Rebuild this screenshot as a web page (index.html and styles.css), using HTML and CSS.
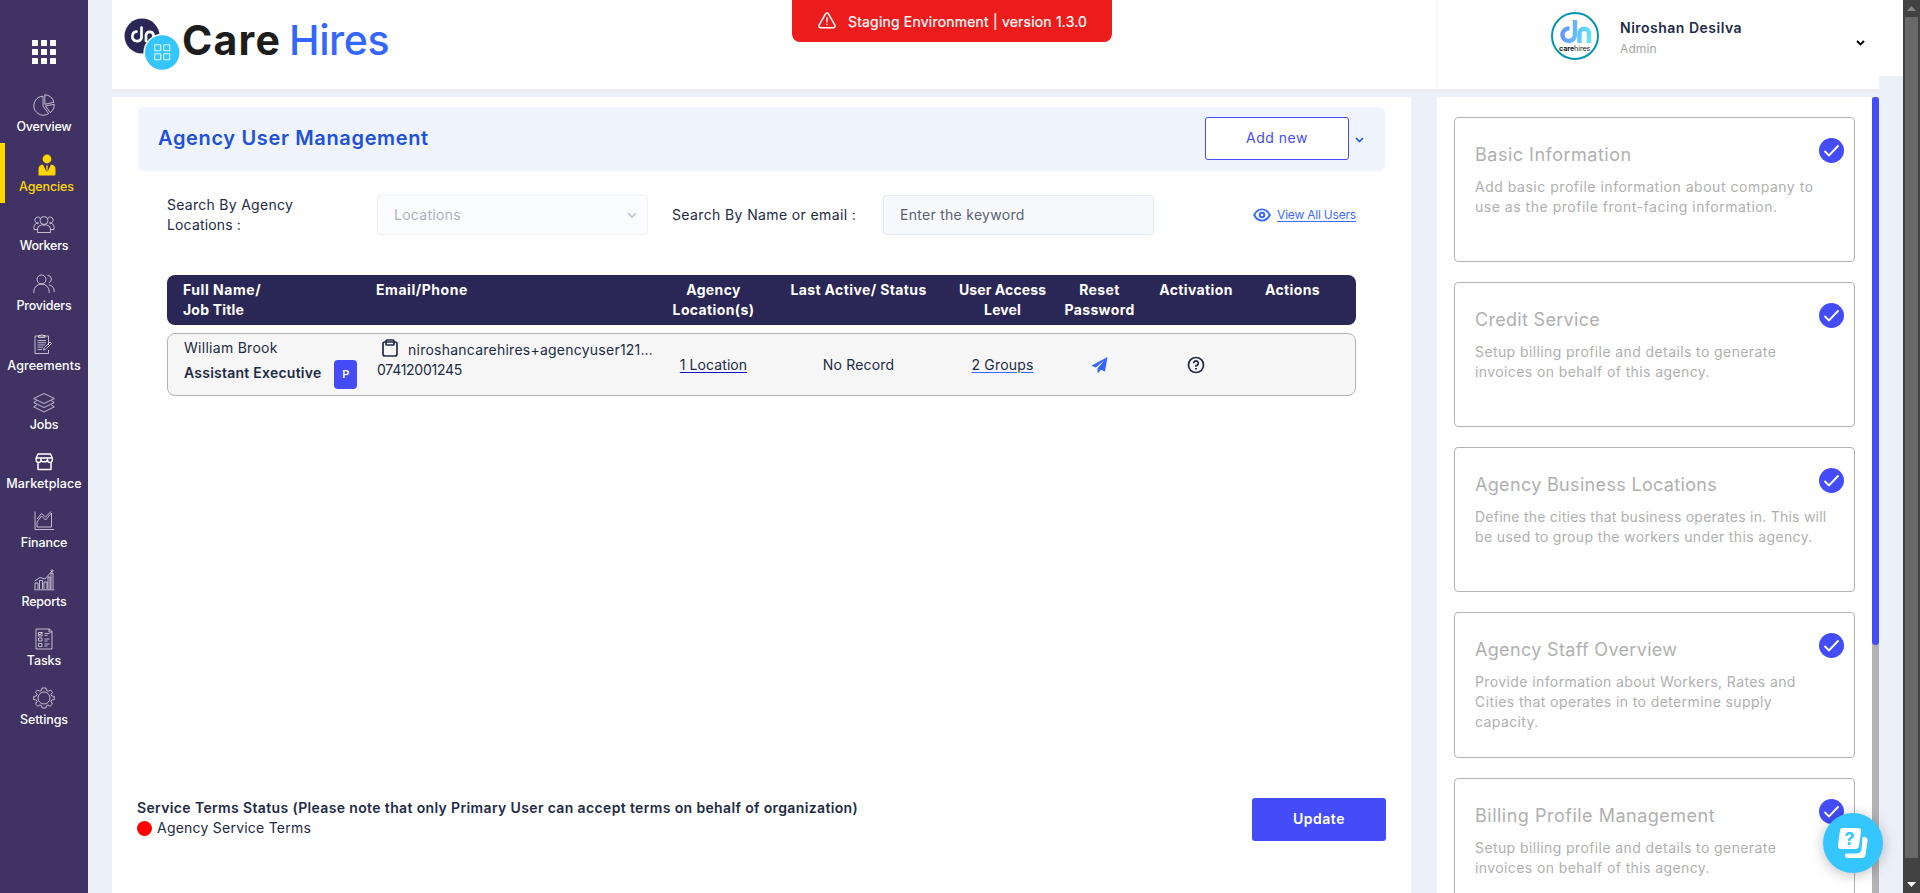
FILE: index.html
```html
<!DOCTYPE html>
<html lang="en">
<head>
<meta charset="utf-8">
<title>Care Hires - Agency User Management</title>
<link rel="stylesheet" href="styles.css">
</head>
<body>
<nav class="sidebar">
  <svg class="apps" width="24" height="24" fill="#fff"><rect width="6" height="6" rx=".6"/><rect x="9" width="6" height="6" rx=".6"/><rect x="18" width="6" height="6" rx=".6"/><rect y="9" width="6" height="6" rx=".6"/><rect x="9" y="9" width="6" height="6" rx=".6"/><rect x="18" y="9" width="6" height="6" rx=".6"/><rect y="18" width="6" height="6" rx=".6"/><rect x="9" y="18" width="6" height="6" rx=".6"/><rect x="18" y="18" width="6" height="6" rx=".6"/></svg>
  <a class="nav-item"><svg viewBox="0 0 22 22"><path d="M10 2.200A9.500 9.500 0 1 0 15.600 19.600L10 12ZM11.800.8A9.300 9.300 0 0 1 20.900 8.300L11.800 10.300ZM12.500 11.900 21.200 10.300A9.500 9.500 0 0 1 17.200 18.600Z"/></svg><span class="tight">Overview</span></a>
  <a class="nav-item active"><svg viewBox="0 0 22 22" class="solid"><circle cx="11" cy="5" r="4.400"/><path d="M2.500 21.500V15Q2.500 11 7 10.500L10.500 18 10.200 12 11 11 11.800 12 11.500 18 15 10.500Q19.500 11 19.500 15V20Q19.500 21.500 18 21.500Z"/></svg><span>Agencies</span></a>
  <a class="nav-item roomy"><svg viewBox="0 0 22 22"><circle cx="11" cy="7.500" r="4"/><path d="M4.500 19.500V16Q4.500 12.500 8.500 12H13.500Q17.500 12.500 17.500 16V19.500ZM7 5A3 3 0 1 0 5.500 10Q1 10.500 1 14V16.500H4M15 5A3 3 0 1 1 16.500 10Q21 10.500 21 14V16.500H18"/></svg><span class="tight">Workers</span></a>
  <a class="nav-item roomy"><svg viewBox="0 0 22 22"><circle cx="8.500" cy="6.500" r="4.500"/><path d="M.8 20V18.500A7.700 7.500 0 0 1 16.200 18.500V20M14.500 2.400A3.800 3.800 0 0 1 15.800 9.800M15.800 12A5.500 6 0 0 1 21.200 18V19"/></svg><span class="tight">Providers</span></a>
  <a class="nav-item"><svg viewBox="0 0 22 22"><path d="M15.500 12V3H2V20.500H15.500V17M5.500 4.500V2.500H7.500A1.400 1.400 0 0 1 10 2.500H12V4.500ZM4.500 7.500H13M4.500 9.700H13M4.500 12H12M4.500 14.200H10M4.500 16.500H9M10.500 17 11 15 17 9 18.500 10.500 12.500 16.500Z"/></svg><span class="wide">Agreements</span></a>
  <a class="nav-item"><svg viewBox="0 0 22 22"><path d="M11 1.500 21.300 6.500 11 11.500.7 6.500ZM3.800 8.500.7 10.500 11 15.500 21.300 10.500 18.200 8.500M3.800 12.800.7 14.800 11 20 21.300 14.800 18.200 12.800"/></svg><span class="tight">Jobs</span></a>
  <a class="nav-item"><svg viewBox="0 0 22 22" class="bold"><path d="M5 3H17.500L19.300 7V9A2.300 2.300 0 0 1 14.500 9 2.300 2.300 0 0 1 11.300 10.500 2.300 2.300 0 0 1 8 9 2.300 2.300 0 0 1 3.200 9V7ZM3.500 7H19M8 7V9M14.500 7V9M5 11.500V18.500H18V11.500"/></svg><span class="wide">Marketplace</span></a>
  <a class="nav-item"><svg viewBox="0 0 22 22"><path d="M2 1.500V19.500H21M4 17V12L8.500 6 12.500 10 18.500 3V17ZM4 9 8.500 3.500 12.500 7 18 1.500"/></svg><span>Finance</span></a>
  <a class="nav-item"><svg viewBox="0 0 22 22"><path d="M1 20.800H21.500M2 20V14H5V20M6.500 20V11.500H9.500V20M11 20V13H14V20M15 20V8H17V20M18 20V4H20V20M1.500 12 7 8.500 12 10 19 2"/><circle cx="19" cy="1.800" r="1"/></svg><span class="tight">Reports</span></a>
  <a class="nav-item"><svg viewBox="0 0 22 22"><path d="M3 1H16.500L19 3.500V21H3ZM16 1V4H19M5.500 4.500H9V8H5.500ZM5.500 10H9V13H5.500ZM5.500 15.500H9V18.500H5.500ZM11.500 5.500H16.500M11.500 7.500H14.500M11.500 11H16.500M11.500 13H14.500M11.500 16H16.500M11.500 18H14.500M6 6 7 7 9.500 4"/></svg><span>Tasks</span></a>
  <a class="nav-item"><svg viewBox="0 0 22 22"><circle cx="11" cy="11" r="6"/><path d="M9 1H13L13.500 3.500 15.300 4.200 17.500 3 19.500 5.500 18 7.500 18.700 9 21.300 9.500V12.500L18.700 13 18 14.800 19.500 17 17 19.300 15 18 13.500 18.700 13 21H9L8.500 18.700 6.800 18 4.700 19.300 2.500 17 4 14.800 3.300 13 .7 12.500V9.500L3.300 9 4 7.500 2.500 5.200 4.700 3 6.800 4.200 8.500 3.500Z"/></svg><span>Settings</span></a>
</nav>

<div class="page">
  <header class="header">
    <div class="brand">
      <svg width="58" height="54" viewBox="0 0 58 54"><circle cx="18" cy="18" r="17.500" fill="#2a2656"/><g fill="none" stroke="#fff" stroke-width="2.700" stroke-linecap="round"><path d="M12.500 13.700A4.700 4.700 0 1 0 17.500 20V9.500"/><path d="M22 23V17A3.800 3.800 0 0 1 29.500 17V23"/></g><circle cx="38.200" cy="34.500" r="18.800" fill="#fff"/><circle cx="38.200" cy="34.500" r="17.300" fill="#36c6ff"/><g fill="none" stroke="#fff" stroke-width="1.100" stroke-opacity=".85"><rect x="30.700" y="26.700" width="6" height="6" rx=".8"/><rect x="39.700" y="26.700" width="6" height="6" rx=".8"/><rect x="30.700" y="35.700" width="6" height="6" rx=".8"/><rect x="39.700" y="35.700" width="6" height="6" rx=".8"/></g></svg>
      <span class="brand-care">Care</span><span class="brand-hires">Hires</span>
    </div>
    <div class="account">
      <svg width="48" height="48" viewBox="0 0 48 48"><defs><linearGradient id="ch" x1="8" x2="40" y1="20" y2="24" gradientUnits="userSpaceOnUse"><stop offset="0" stop-color="#668cff"/><stop offset="1" stop-color="#5ee7fb"/></linearGradient></defs><circle cx="24" cy="24" r="23" fill="#fff" stroke="#0496b0" stroke-width="2"/><g fill="none" stroke="url(#ch)" stroke-width="4.400"><path d="M18.500 16.500A6.300 6.300 0 1 0 24 22.800V8"/><path d="M28.500 31V21.500A4.700 4.700 0 0 1 38 21.500V31"/></g><text x="8" y="39" class="avatar-text"><tspan font-weight="700">care</tspan>hires</text></svg>
      <div class="who"><b>Niroshan Desilva</b><span>Admin</span></div>
      <svg class="caret" width="9" height="6" viewBox="0 0 9 6"><path d="M1 1 4.500 4.500 8 1" fill="none" stroke="#000" stroke-width="1.900"/></svg>
    </div>
    <div class="header-corner"></div>
  </header>

  <div class="columns">
    <main class="card">
      <div class="titlebar">
        <h1>Agency User Management</h1>
        <button class="btn-outline">Add new</button>
        <svg width="9" height="6" viewBox="0 0 9 6"><path d="M1 1 4.500 4.500 8 1" fill="none" stroke="#2456e0" stroke-width="1.700"/></svg>
      </div>
      <div class="filters">
        <label class="lbl-loc">Search By Agency<br><span class="loc2">Locations :</span></label>
        <div class="select"><span>Locations</span><svg width="10" height="7" viewBox="0 0 10 7"><path d="M1 1.200 5 5.200 9 1.200" fill="none" stroke="#c3c8d4" stroke-width="1.700"/></svg></div>
        <label class="lbl-name">Search By Name or email :</label>
        <div class="input">Enter the keyword</div>
        <a class="view-all"><svg width="18" height="14" viewBox="0 0 18 14" fill="none" stroke="#3366ff" stroke-width="1.900"><path d="M1.200 7Q4 1.400 9 1.400T16.800 7Q14 12.600 9 12.600T1.200 7Z"/><circle cx="9" cy="7" r="2.300"/></svg><span>View All Users</span></a>
      </div>
      <div class="grid thead">
        <div class="left">Full Name/<br><span class="jt">Job Title</span></div><div class="left">Email/Phone</div><div>Agency<br>Location(s)</div><div>Last Active/ Status</div><div class="ua">User Access<br>Level</div><div>Reset<br>Password</div><div>Activation</div><div>Actions</div>
      </div>
      <div class="grid trow">
        <div class="person"><span>William Brook</span><div class="role"><b>Assistant Executive</b><i>P</i></div></div>
        <div class="contact"><div class="mail"><svg width="16" height="18" viewBox="0 0 16 18" fill="none" stroke="#222b45" stroke-width="1.700"><rect x="1" y="3" width="14" height="14" rx="2"/><rect x="4" y="1" width="8" height="5" rx="1"/></svg><span>niroshancarehires+agencyuser121…</span></div><div class="phone">07412001245</div></div>
        <div><a class="link loc-link">1 Location</a></div>
        <div>No Record</div>
        <div><a class="link grp-link">2 Groups</a></div>
        <div><svg width="17" height="16" viewBox="0 0 17 16" fill="#3366ff"><path d="M16.500 0 14 14.500 9.800 12.700 7.500 15.700 6.500 15.500V11.600L13.500 3.200 4.800 10.600.4 8.800Z"/></svg></div>
        <div><svg width="18" height="18" viewBox="0 0 18 18" fill="none" stroke="#222b45" stroke-width="1.700"><circle cx="9" cy="9" r="7.500"/><path d="M6.700 7.300A2.300 2.300 0 1 1 9 9.500V10.800"/><path d="M9 12V13.600" stroke-width="1.900"/></svg></div>
        <div></div>
      </div>
      <footer class="terms">
        <div><b>Service Terms Status (Please note that only Primary User can accept terms on behalf of organization)</b><p><i></i>Agency Service Terms</p></div>
        <button class="btn-solid">Update</button>
      </footer>
    </main>

    <aside class="panel">
      <div class="steps">
        <section class="step"><svg class="tick" viewBox="0 0 25 25"><circle cx="12.500" cy="12.500" r="12.500"/><path d="M5.500 13 10 17.500 19.500 7.500"/></svg><h2>Basic Information</h2><p class="d1">Add basic profile information about company to<br>use as the profile front-facing information.</p></section>
        <section class="step"><svg class="tick" viewBox="0 0 25 25"><circle cx="12.500" cy="12.500" r="12.500"/><path d="M5.500 13 10 17.500 19.500 7.500"/></svg><h2 class="h2">Credit Service</h2><p>Setup billing profile and details to generate<br>invoices on behalf of this agency.</p></section>
        <section class="step"><svg class="tick" viewBox="0 0 25 25"><circle cx="12.500" cy="12.500" r="12.500"/><path d="M5.500 13 10 17.500 19.500 7.500"/></svg><h2 class="h3">Agency Business Locations</h2><p class="d3">Define the cities that business operates in. This will<br><span class="d3b">be used to group the workers under this agency.</span></p></section>
        <section class="step tall"><svg class="tick" viewBox="0 0 25 25"><circle cx="12.500" cy="12.500" r="12.500"/><path d="M5.500 13 10 17.500 19.500 7.500"/></svg><h2 class="h3">Agency Staff Overview</h2><p>Provide information about Workers, Rates and<br>Cities that operates in to determine supply<br>capacity.</p></section>
        <section class="step"><svg class="tick" viewBox="0 0 25 25"><circle cx="12.500" cy="12.500" r="12.500"/><path d="M5.500 13 10 17.500 19.500 7.500"/></svg><h2>Billing Profile Management</h2><p>Setup billing profile and details to generate<br>invoices on behalf of this agency.</p></section>
      </div>
      <div class="panel-scroll"><div></div></div>
    </aside>
  </div>
</div>

<div class="window-scroll"><svg width="9" height="5" viewBox="0 0 9 5"><path d="M0 5 4.500 0 9 5Z" fill="#858585"/></svg><div></div><svg width="9" height="5" viewBox="0 0 9 5"><path d="M0 0 4.500 5 9 0Z" fill="#fff"/></svg></div>

<div class="banner"><svg width="18" height="17" viewBox="0 0 18 17" fill="none" stroke="#fff" stroke-width="1.500" stroke-linejoin="round" stroke-linecap="round"><path d="M7.700 1.700Q9 .2 10.300 1.700L16.900 13.200Q17.600 15.400 15.500 15.700H2.500Q.4 15.400 1.100 13.200ZM9 5.800V9.800M9 12.300V12.500"/></svg><span>Staging Environment | version 1.3.0</span></div>

<div class="fab"><svg width="32" height="32" viewBox="0 0 32 32"><path d="M25.500 10H27.500Q31 10.500 30.500 14L28.500 28Q28 31 25 31H11Q8 31 8 28V26.500H20Q24 26 24.600 22Z" fill="#fff"/><path d="M5 1H21Q24.500 1 24 4.500L22 19Q21.500 22 18.500 22H4Q.6 22 1 18.500L3 3.500Q3.200 1 5 1Z" fill="#fff"/><text x="7.500" y="18" class="fab-q">?</text></svg></div>
</body>
</html>
```
FILE: styles.css
```css
* { box-sizing: border-box; }
body { margin: 0; height: 893px; overflow: hidden; display: flex; position: relative; background: #ecf0f9; color: #222b45; font: 400 14px/20px Inter, sans-serif; letter-spacing: .28px; }
h1, h2, p { margin: 0; font-weight: 400; }
svg { display: block; flex: none; }
button { font: inherit; letter-spacing: .5px; padding: 0; }

.sidebar { width: 88px; height: 893px; flex: none; background: #403364; display: flex; flex-direction: column; align-items: stretch; padding-top: 40px; }
.apps { align-self: center; margin-bottom: 20px; }
.nav-item { height: 59px; flex: none; display: flex; flex-direction: column; align-items: center; padding-top: 10px; color: #fff; font-size: 12.5px; font-weight: 500; letter-spacing: -.1px; line-height: 20px; }
.nav-item.roomy { height: 60px; }
.nav-item .tight { letter-spacing: -.22px; }
.nav-item .wide { letter-spacing: .08px; }
.nav-item svg { width: 22px; height: 22px; margin-bottom: 1px; fill: none; stroke: #fff; stroke-width: .85; stroke-opacity: .8; stroke-linejoin: round; }
.nav-item svg.bold { stroke-width: 1.5; stroke-opacity: 1; }
.nav-item svg.solid { fill: #ffd600; stroke: none; }
.nav-item.active { height: 60px; padding-top: 11px; border-left: 5px solid #ffd600; color: #ffd600; }

.page { width: 1791px; margin-left: 24px; flex: none; display: flex; flex-direction: column; }
.header { height: 97px; display: flex; flex: none; }
.brand { width: 1325px; height: 92px; background: #fff; border-bottom: 3px solid #ececec; border-right: 1px solid #f5f5f5; display: flex; align-items: flex-start; padding: 18px 0 0 12px; line-height: 44px; font-size: 41px; }
.brand-care { font-weight: 700; color: #1d1d1b; letter-spacing: 1.2px; }
.brand-hires { font-weight: 500; color: #3366ff; letter-spacing: -.4px; margin-left: 8px; }
.account { width: 442px; height: 92px; background: #fff; border-bottom: 3px solid #ececec; display: flex; align-items: flex-start; padding: 12px 14px 0 114px; }
.avatar-text { font-size: 7.2px; letter-spacing: -.1px; fill: #222; }
.who { width: 130px; margin-left: 21px; padding-top: 6px; display: flex; flex-direction: column; }
.who b { font-weight: 600; letter-spacing: .5px; line-height: 20px; white-space: nowrap; }
.who span { font-size: 12px; color: #a3a3a3; line-height: 22px; letter-spacing: .1px; }
.caret { margin: 28px 0 0 auto; }
.header-corner { flex: 1; height: 76px; background: #fff; }

.columns { display: flex; gap: 26px; height: 796px; }
.card { width: 1299px; background: #fff; padding: 10px 26px 0; display: flex; flex-direction: column; }
.titlebar { height: 64px; background: #eff4ff; border-radius: 6px; display: flex; align-items: center; padding: 0 21px 2px 20px; }
.titlebar h1 { font-size: 20px; line-height: 28px; font-weight: 600; color: #2150d9; letter-spacing: .65px; margin-right: auto; padding-bottom: 1px; }
.btn-outline { width: 144px; height: 43px; border: 1px solid #444cf7; border-radius: 3px; background: #fff; color: #444cf7; margin-right: 6px; padding-bottom: 1px; }
.titlebar svg { margin-top: 3px; }
.filters { display: flex; align-items: center; height: 40px; margin: 24px 29px 0; }
.lbl-loc { width: 210px; white-space: nowrap; }
.loc2 { letter-spacing: .15px; }
.select { width: 271px; height: 40px; border: 1px solid #eff2f7; border-radius: 3px; background: #fbfcfe; color: #aeb1ba; display: flex; align-items: center; justify-content: space-between; padding: 0 10px 0 16px; }
.lbl-name { margin-left: 24px; width: 211px; letter-spacing: .38px; white-space: nowrap; }
.input { width: 271px; height: 40px; border: 1px solid #e4e9f2; border-radius: 3px; background: #f7f9fc; color: #5b6172; padding: 9px 16px; }
.view-all { margin-left: auto; display: flex; align-items: center; gap: 6px; font-size: 12px; color: #3f6bff; letter-spacing: -.2px; text-decoration: underline; text-underline-offset: 2px; white-space: nowrap; }

.grid { display: grid; grid-template-columns: 193px 280px 115px 175px 113px 81px 112px 81px; margin: 0 29px; padding-left: 16px; text-align: center; white-space: nowrap; border-radius: 8px; }
.thead { height: 50px; margin-top: 40px; padding-top: 5px; background: #2a2656; color: #fff; font-weight: 700; letter-spacing: .38px; }
.left { text-align: left; }
.left:first-child, .left + .left, .thead .left { letter-spacing: .55px; }
.thead .jt { letter-spacing: .18px; }
.ua { letter-spacing: .1px; }
.trow { height: 63px; margin-top: 8px; padding-left: 15px; background: #f6f6f6; border: 1px solid #b3b3b3; align-items: center; letter-spacing: .18px; }
.trow > div { display: flex; justify-content: center; }
.trow .person { flex-direction: column; height: 61px; justify-content: flex-start; text-align: left; padding: 4px 0 0 1px; letter-spacing: .28px; }
.role { display: flex; height: 30px; margin-top: 1px; gap: 13px; }
.role b { font-weight: 600; line-height: 28px; letter-spacing: .24px; }
.role i { width: 23px; height: 29px; margin-top: 1px; border-radius: 4px; background: #444cf7; color: #fff; font: 600 11px/29px Inter, sans-serif; text-align: center; }
.trow .contact { flex-direction: column; height: 61px; justify-content: flex-start; padding: 6px 0 0 1px; text-align: left; letter-spacing: .24px; }
.mail { display: flex; gap: 10px; padding-left: 5px; }
.mail svg { margin-top: -1px; }
.phone { letter-spacing: -.26px; }
.link { text-decoration: underline; text-underline-offset: 2px; }
.loc-link { text-decoration-color: #1111cc; letter-spacing: .08px; }
.grp-link { text-decoration-color: #3366ff; }

.terms { display: flex; justify-content: space-between; margin: 402px -1px 0; }
.terms b { font-weight: 600; letter-spacing: .36px; }
.terms p { display: flex; align-items: center; gap: 5px; letter-spacing: .23px; }
.terms i { width: 15px; height: 15px; border-radius: 50%; background: red; }
.btn-solid { width: 134px; height: 43px; border: 0; border-radius: 3px; background: #444cf7; color: #fff; font-weight: 600; padding-bottom: 1px; }

.panel { width: 442px; background: #fff; display: flex; overflow: hidden; }
.steps { width: 435px; padding: 20px 17px 0; display: flex; flex-direction: column; gap: 20px; flex: none; }
.step { position: relative; height: 145px; flex: none; border: 1px solid #b3b3b3; border-radius: 4px; padding: 24px 0 0 20px; color: #b0b0b0; white-space: nowrap; }
.step.tall { height: 146px; }
.step h2 { font-size: 18px; line-height: 26px; letter-spacing: .5px; margin-bottom: 5px; }
.step h2.h2 { letter-spacing: .3px; }
.step h2.h3 { letter-spacing: .33px; }
.step p { line-height: 20px; padding-top: 4px; letter-spacing: .4px; }
.step p.d1 { letter-spacing: .52px; }
.step p.d3 { letter-spacing: .24px; }
.d3b { letter-spacing: .36px; }
.tick { position: absolute; right: 10px; top: 20px; width: 25px; height: 25px; fill: #444cf7; }
.tick path { fill: none; stroke: #fff; stroke-width: 1.9; }
.panel-scroll { width: 7px; background: #b3b3b3; }
.panel-scroll div { height: 548px; background: #444cf7; border-radius: 4px; }

.window-scroll { width: 17px; height: 893px; background: #424242; display: flex; flex-direction: column; align-items: center; padding: 6px 0; flex: none; }
.window-scroll div { width: 13px; height: 841px; margin-top: 6px; background: #686868; }
.window-scroll svg:last-child { margin-top: auto; }

.banner { position: absolute; left: 792px; top: 0; width: 320px; height: 42px; border-radius: 0 0 8px 8px; background: #ec1c1c; color: #fff; display: flex; gap: 12px; padding: 12px 0 0 26px; letter-spacing: .2px; white-space: nowrap; }
.banner span { -webkit-text-stroke: .2px #fff; }
.fab { position: absolute; left: 1823px; top: 813px; width: 60px; height: 60px; border-radius: 50%; background: #36c6ff; box-shadow: 0 2px 14px rgba(0,0,0,.25); display: grid; place-items: center; }
.fab-q { font: 700 18px Inter, sans-serif; fill: #36c6ff; }
```
